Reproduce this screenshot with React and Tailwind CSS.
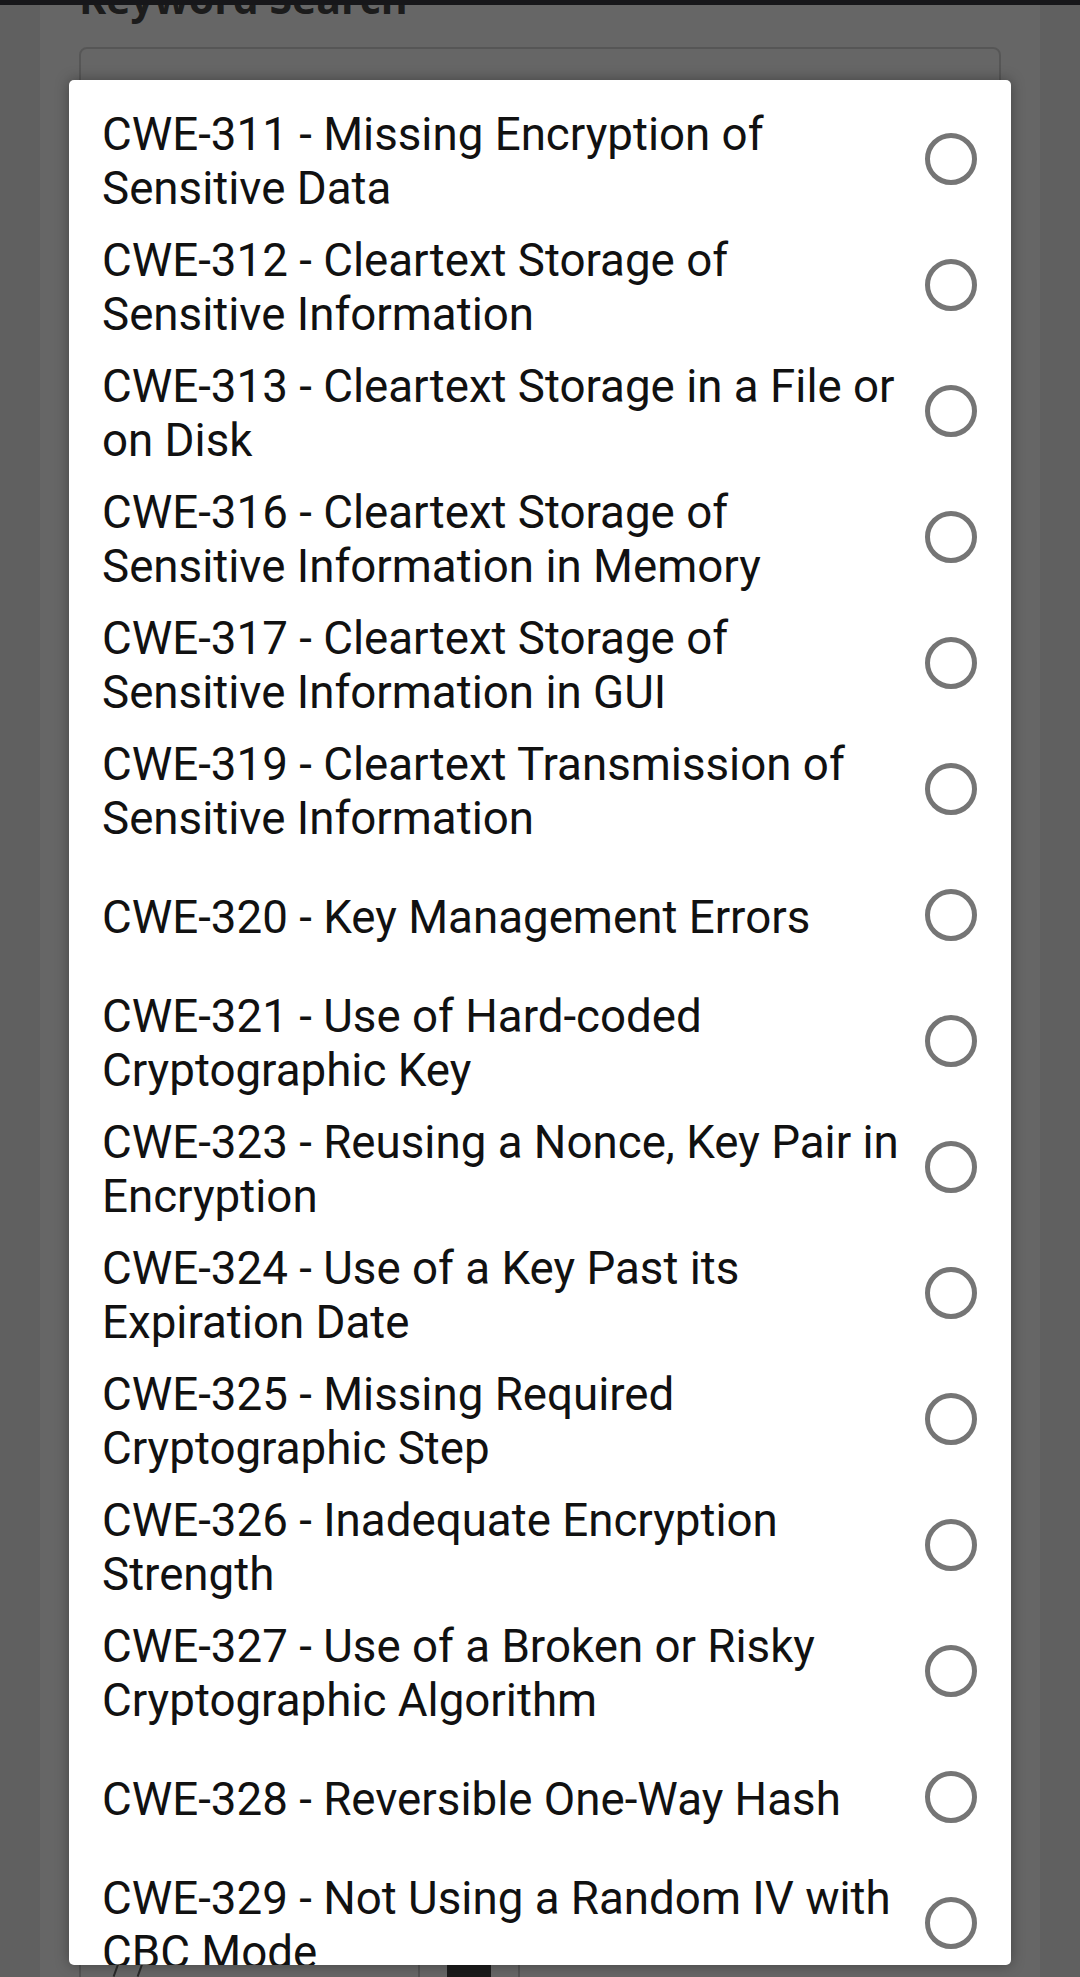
import React from 'react';

const options = [
    'CWE-311 - Missing Encryption of Sensitive Data',
    'CWE-312 - Cleartext Storage of Sensitive Information',
    'CWE-313 - Cleartext Storage in a File or on Disk',
    'CWE-316 - Cleartext Storage of Sensitive Information in Memory',
    'CWE-317 - Cleartext Storage of Sensitive Information in GUI',
    'CWE-319 - Cleartext Transmission of Sensitive Information',
    'CWE-320 - Key Management Errors',
    'CWE-321 - Use of Hard-coded Cryptographic Key',
    'CWE-323 - Reusing a Nonce, Key Pair in Encryption',
    'CWE-324 - Use of a Key Past its Expiration Date',
    'CWE-325 - Missing Required Cryptographic Step',
    'CWE-326 - Inadequate Encryption Strength',
    'CWE-327 - Use of a Broken or Risky Cryptographic Algorithm',
    'CWE-328 - Reversible One-Way Hash',
    'CWE-329 - Not Using a Random IV with CBC Mode',
];

const OptionRow = ({ label }) => (
    <div className="h-[126px] shrink-0 flex items-center pl-[33px] pr-[34px]">
        <p className="flex-1 mr-[13px] pt-[6px] text-[45.7px] leading-[54px] text-[#111]">{label}</p>
        <span className="w-[52px] h-[52px] rounded-full border-[5px] border-[#757575] shrink-0" />
    </div>
);

const App = () => {
    return (
        <div className="relative w-[1080px] h-[1977px] overflow-hidden bg-[#efefef] font-['Roboto',sans-serif]">
            {/* page behind the dialog */}
            <div className="mx-[40px] h-full bg-white flex flex-col px-[39px]">
                <h2 className="-mt-[26px] text-[41px] leading-[48px] font-bold font-['Open_Sans',sans-serif] text-[#474747]">
                    Keyword Search
                </h2>
                <div className="mt-[25px] h-[140px] rounded-[8px] border-2 border-[#d8d8d8]" />
                <div className="flex-1" />
                <div className="h-[24px] flex">
                    <div className="w-[341px] border-l-2 border-r-2 border-[#d0d0d0] pl-[34px] flex gap-[22px]">
                        <span className="mt-[10px] w-[2px] h-[14px] bg-[#666] rotate-[20deg]" />
                        <span className="mt-[10px] w-[2px] h-[14px] bg-[#666] rotate-[20deg]" />
                    </div>
                    <div className="w-[100px] border-r-2 border-[#d0d0d0] flex justify-center">
                        <span className="mt-[8px] w-[44px] h-[16px] rounded-t-[4px] bg-[#444]" />
                    </div>
                </div>
            </div>

            {/* scrim + dialog */}
            <div className="absolute inset-0 bg-black/60">
                <div className="mt-[80px] ml-[69px] w-[942px] h-[1885px] bg-white rounded-[5px] overflow-hidden shadow-[0_0_14px_rgba(0,0,0,0.35)] flex flex-col pt-[16px]">
                    {options.map(option => (
                        <OptionRow key={option} label={option} />
                    ))}
                </div>
            </div>

            <div className="absolute top-0 inset-x-0 h-[5px] bg-[#17171a]" />
        </div>
    );
};

export default App;
